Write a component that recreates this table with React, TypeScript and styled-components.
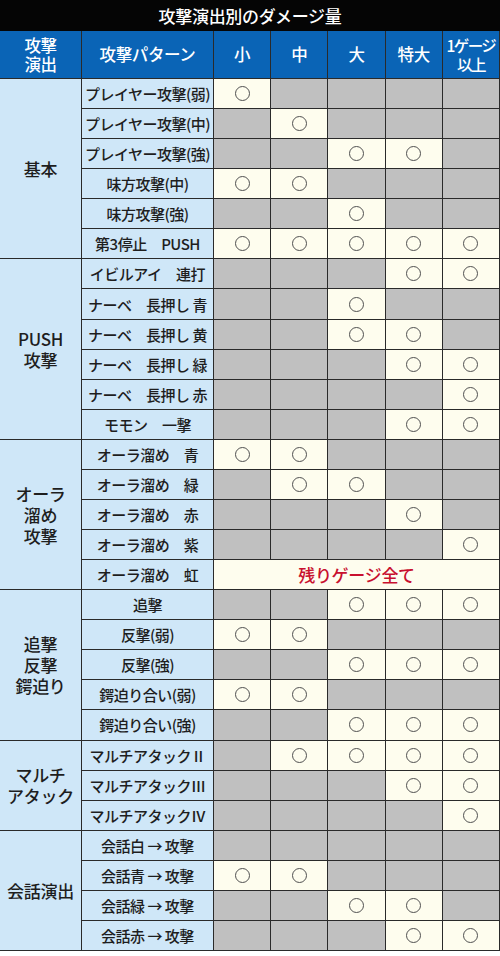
import React from "react";
import styled, { createGlobalStyle } from "styled-components";

const Global = createGlobalStyle`
  html, body { margin: 0; padding: 0; background: #fff; }
  body { font-family: "Noto Sans CJK JP", "Noto Sans", sans-serif; }
`;

const Page = styled.div`
  width: 500px;
  display: flex;
  flex-direction: column;
`;

const Title = styled.div`
  height: 31px;
  background: #050505;
  color: #fff;
  display: flex;
  align-items: center;
  justify-content: center;
  font-size: 17px;
  font-weight: 500;
  letter-spacing: -0.3px;
`;

const Grid = styled.div`
  display: grid;
  grid-template-columns: 81px 131px repeat(5, 1fr);
  grid-template-rows: 47px repeat(29, 1fr);
  gap: 1px;
  height: 919px;
  background: #2a2a2a;
  border-bottom: 1px solid #2a2a2a;
  border-right: 1px solid #2a2a2a;
`;

const Head = styled.div<{ $tight?: boolean }>`
  background: #0a64b6;
  color: #fff;
  display: flex;
  align-items: center;
  justify-content: center;
  text-align: center;
  font-size: ${(p) => (p.$tight ? "15.5px" : "16.5px")};
  font-weight: 500;
  line-height: 19px;
  white-space: pre;
  letter-spacing: ${(p) => (p.$tight ? "-1.6px" : "-0.4px")};
`;

const Group = styled.div<{ $span: number }>`
  grid-row: span ${(p) => p.$span};
  background: #cfe7f8;
  color: #1e1e1e;
  display: flex;
  align-items: center;
  justify-content: center;
  text-align: center;
  font-size: 17px;
  font-weight: 500;
  line-height: 21px;
  white-space: pre-line;
  letter-spacing: -0.3px;
`;

const Name = styled.div`
  grid-column: 2;
  background: #cfe7f8;
  color: #1e1e1e;
  display: flex;
  align-items: center;
  justify-content: center;
  font-size: 15px;
  font-weight: 500;
  letter-spacing: -0.5px;
  white-space: pre;
`;

const Cell = styled.div<{ $on: boolean }>`
  background: ${(p) => (p.$on ? "#fefdee" : "#c0c0c0")};
  display: flex;
  align-items: center;
  justify-content: center;
`;

const Circle = styled.span`
  width: 13px;
  height: 13px;
  border: 1.3px solid #505050;
  border-radius: 50%;
`;

const Wide = styled.div`
  grid-column: span 5;
  background: #fefdee;
  color: #c8102e;
  display: flex;
  align-items: center;
  justify-content: center;
  font-size: 17px;
  font-weight: 500;
  letter-spacing: -0.3px;
`;

type Row = { name: string; marks?: string; all?: string };
type Sec = { label: string; rows: Row[] };

const data: Sec[] = [
  {
    label: "基本",
    rows: [
      { name: "プレイヤー攻撃(弱)", marks: "10000" },
      { name: "プレイヤー攻撃(中)", marks: "01000" },
      { name: "プレイヤー攻撃(強)", marks: "00110" },
      { name: "味方攻撃(中)", marks: "11000" },
      { name: "味方攻撃(強)", marks: "00100" },
      { name: "第3停止　PUSH", marks: "11111" },
    ],
  },
  {
    label: "PUSH\n攻撃",
    rows: [
      { name: "イビルアイ　連打", marks: "00011" },
      { name: "ナーベ　長押し 青", marks: "00100" },
      { name: "ナーベ　長押し 黄", marks: "00110" },
      { name: "ナーベ　長押し 緑", marks: "00011" },
      { name: "ナーベ　長押し 赤", marks: "00001" },
      { name: "モモン　一撃", marks: "00011" },
    ],
  },
  {
    label: "オーラ\n溜め\n攻撃",
    rows: [
      { name: "オーラ溜め　青", marks: "11000" },
      { name: "オーラ溜め　緑", marks: "01100" },
      { name: "オーラ溜め　赤", marks: "00010" },
      { name: "オーラ溜め　紫", marks: "00001" },
      { name: "オーラ溜め　虹", all: "残りゲージ全て" },
    ],
  },
  {
    label: "追撃\n反撃\n鍔迫り",
    rows: [
      { name: "追撃", marks: "00111" },
      { name: "反撃(弱)", marks: "11000" },
      { name: "反撃(強)", marks: "00111" },
      { name: "鍔迫り合い(弱)", marks: "11000" },
      { name: "鍔迫り合い(強)", marks: "00111" },
    ],
  },
  {
    label: "マルチ\nアタック",
    rows: [
      { name: "マルチアタックⅡ", marks: "01111" },
      { name: "マルチアタックⅢ", marks: "00011" },
      { name: "マルチアタックⅣ", marks: "00001" },
    ],
  },
  {
    label: "会話演出",
    rows: [
      { name: "会話白 → 攻撃", marks: "00000" },
      { name: "会話青 → 攻撃", marks: "11000" },
      { name: "会話緑 → 攻撃", marks: "00110" },
      { name: "会話赤 → 攻撃", marks: "00011" },
    ],
  },
];

const heads = ["攻撃\n演出", "攻撃パターン", "小", "中", "大", "特大"];

export default function App() {
  return (
    <Page>
      <Global />
      <Title>攻撃演出別のダメージ量</Title>
      <Grid>
        {heads.map((h) => (
          <Head key={h}>{h}</Head>
        ))}
        <Head $tight>{"1ゲージ\n以上"}</Head>
        {data.map((sec) => (
          <React.Fragment key={sec.label}>
            <Group $span={sec.rows.length}>{sec.label}</Group>
            {sec.rows.map((r) => (
              <React.Fragment key={r.name}>
                <Name>{r.name}</Name>
                {r.all ? (
                  <Wide>{r.all}</Wide>
                ) : (
                  r.marks!.split("").map((m, j) => (
                    <Cell key={j} $on={m === "1"}>
                      {m === "1" && <Circle />}
                    </Cell>
                  ))
                )}
              </React.Fragment>
            ))}
          </React.Fragment>
        ))}
      </Grid>
    </Page>
  );
}
